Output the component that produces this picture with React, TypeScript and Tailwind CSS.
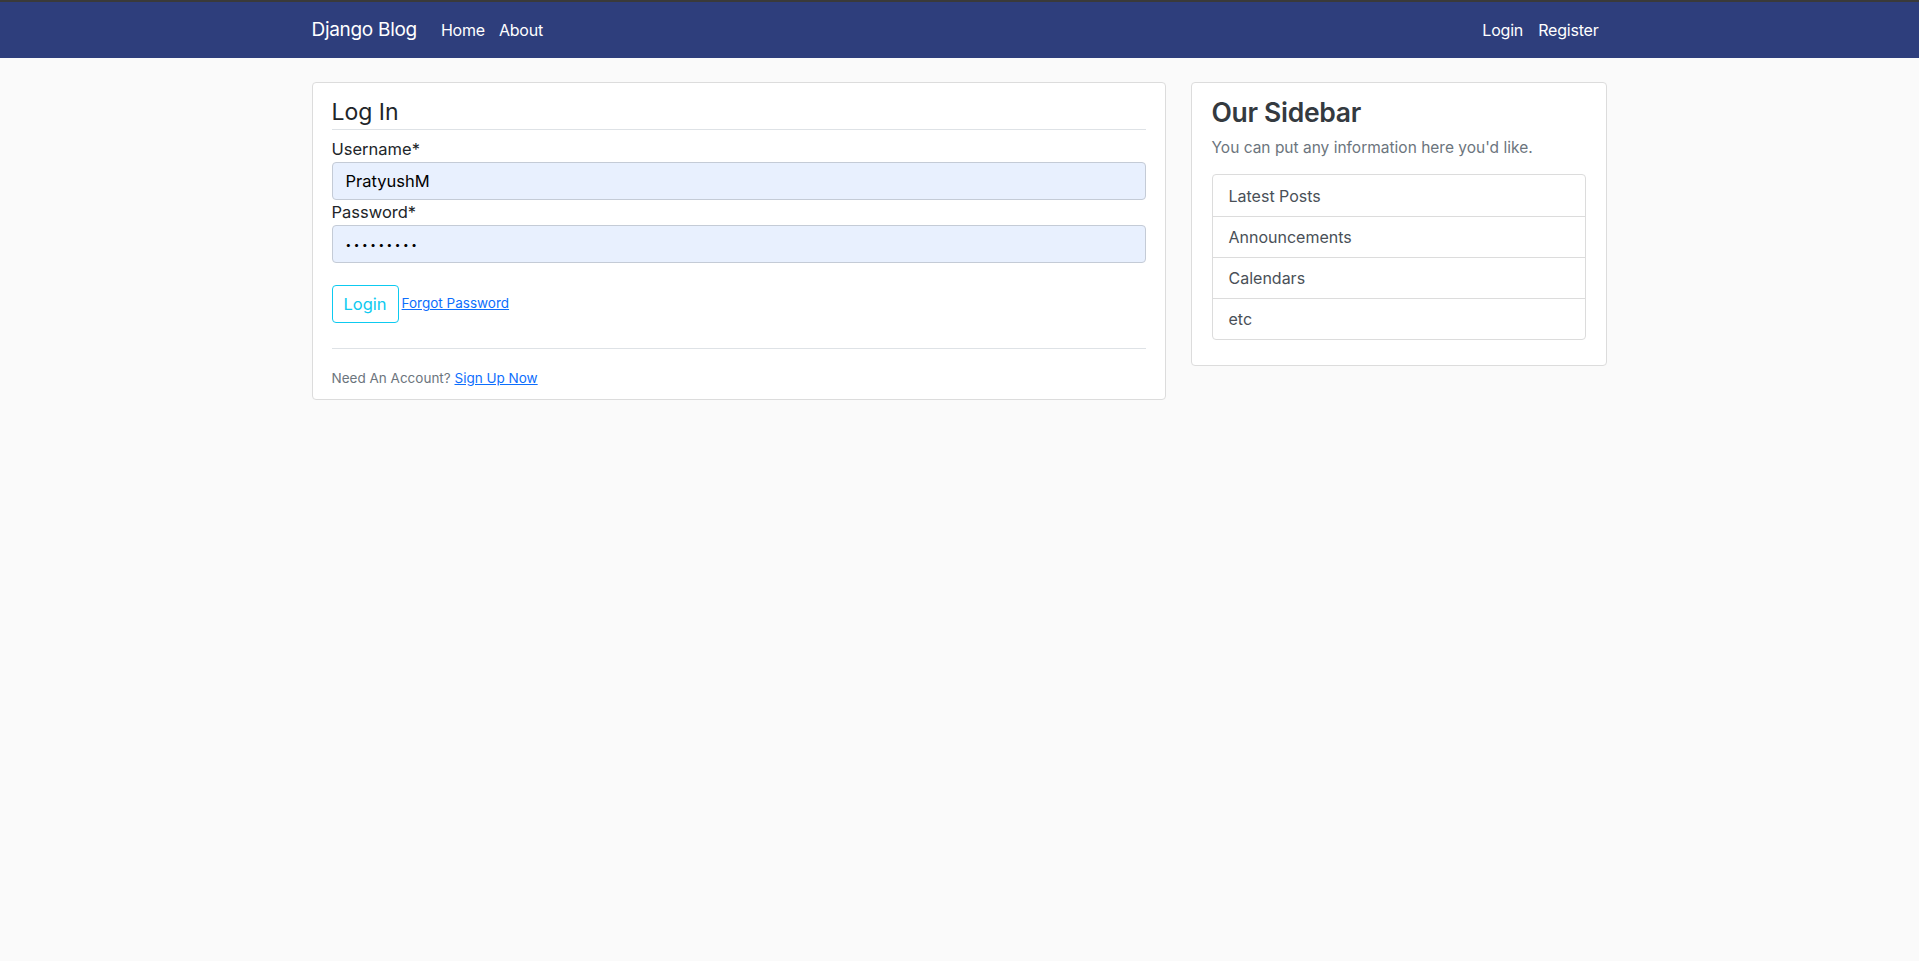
import React from 'react'

const font = { fontFamily: 'Inter, "Noto Sans", sans-serif' }

const NavBar: React.FC = () => (
  <nav className="h-[58px] border-t-2 border-[#3a3a3a] bg-[#2e3e7c]">
    <div className="mx-auto flex h-full w-[1296px] items-center">
      <a className="text-[19px] tracking-[-0.3px] text-white">Django Blog</a>
      <div className="ml-[24px] flex gap-[14px] text-[16px] tracking-[-0.2px] text-white">
        <a>Home</a>
        <a>About</a>
      </div>
      <div className="ml-auto mr-[9px] flex gap-[15px] text-[16px] tracking-[-0.2px] text-white">
        <a>Login</a>
        <a>Register</a>
      </div>
    </div>
  </nav>
)

const Field: React.FC<{ label: string; type?: string; value: string }> = ({ label, type = 'text', value }) => (
  <div>
    <label className="block text-[16.5px] leading-[25px] text-[#212529]">{label}</label>
    <input
      type={type}
      defaultValue={value}
      readOnly
      className={`block h-[38px] w-full rounded-[4px] border border-[#c4cbd6] bg-[#e8f0fe] px-[13px] text-black outline-none ${
        type === 'password' ? 'text-[10px] tracking-[2.6px]' : 'text-[16.5px]'
      }`}
    />
  </div>
)

const LoginCard: React.FC = () => (
  <div className="w-[854px] rounded-[4px] border border-[#dcdcdc] bg-white px-[19px] pt-[14px] pb-[10px]">
    <h2 className="border-b border-[#dee2e6] pb-[1px] text-[23px] leading-[31px] text-[#212529]">Log In</h2>
    <div className="mt-[7px] flex flex-col">
      <Field label="Username*" value="PratyushM" />
      <Field label="Password*" type="password" value="password1" />
    </div>
    <div className="mt-[22px] flex items-start">
      <button className="h-[38px] rounded-[4px] border border-[#0dcaf0] px-[11px] text-[16.5px] text-[#0dcaf0]">Login</button>
      <a className="ml-[3px] mt-[8px] text-[13.5px] text-[#0d6efd] underline">Forgot Password</a>
    </div>
    <div className="mt-[25px] border-t border-[#dee2e6] pt-[16px]">
      <span className="text-[13.5px] text-[#6c757d]">
        Need An Account? <a className="text-[#0d6efd] underline">Sign Up Now</a>
      </span>
    </div>
  </div>
)

const Sidebar: React.FC = () => (
  <div className="w-[416px] self-start rounded-[4px] border border-[#dcdcdc] bg-white px-[20px] pt-[12px] pb-[25px]">
    <h3 className="text-[26.5px] font-semibold leading-[34px] tracking-[-0.3px] text-[#343a40]">Our Sidebar</h3>
    <p className="mt-[7px] text-[15.5px] text-[#6c757d]">You can put any information here you'd like.</p>
    <ul className="mt-[15px] rounded-[4px] border border-[#dcdcdc]">
      {['Latest Posts', 'Announcements', 'Calendars', 'etc'].map((item, i) => (
        <li
          key={item}
          className={`flex h-[41px] items-center px-[16px] text-[16px] text-[#495057] ${i > 0 ? 'border-t border-[#dcdcdc]' : ''}`}
        >
          {item}
        </li>
      ))}
    </ul>
  </div>
)

export default function App() {
  return (
    <div className="min-h-[961px] bg-[#fafafa]" style={font}>
      <NavBar />
      <main className="mx-auto mt-[24px] flex w-[1296px] gap-[25px]">
        <LoginCard />
        <Sidebar />
      </main>
    </div>
  )
}
